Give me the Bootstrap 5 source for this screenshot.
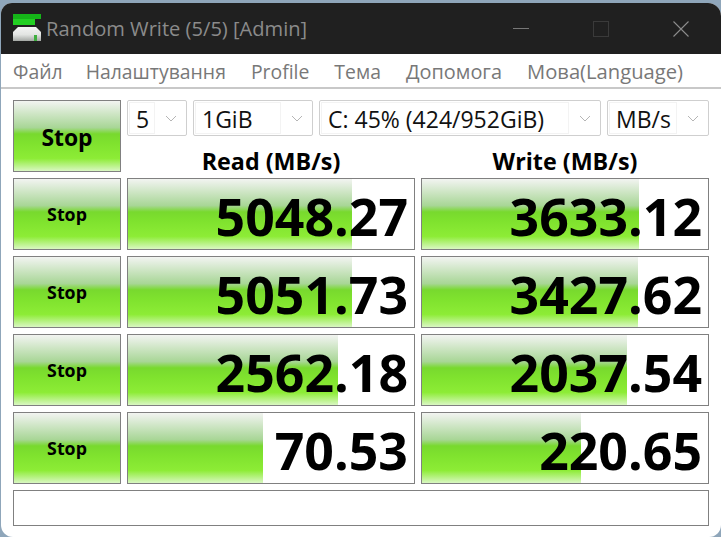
<!DOCTYPE html>
<html lang="uk">
<head>
<meta charset="utf-8">
<title>Random Write (5/5) [Admin]</title>
<link href="https://cdn.jsdelivr.net/npm/bootstrap@5.3.0/dist/css/bootstrap.min.css" rel="stylesheet">
<style>
html,body{height:100%;overflow:hidden}
body{background:#8fa6ba;font-family:"Open Sans","Noto Sans",sans-serif;color:#000;padding:3px 0 0 1px}
.app-win{width:720px;height:534px;background:#fff;border-radius:11px 13px 12px 12px;overflow:hidden}
.title-bar{height:51px;background:#202020;color:#8b8b8b;padding-left:12px}
.title-text{font-size:20.1px;margin-left:4px;line-height:1;padding-top:2px}
.win-ctrls{margin-left:auto;color:#8b8b8b}
.win-ctl{width:80px;height:51px}
.menu-row{height:35px;border-bottom:2px solid #c8c8c8;padding:2px 0 0 12px;gap:25px;font-size:19.4px;color:#787878;line-height:1}
.menu-first{margin-right:-2px}
.menu-wide{font-size:19.9px}
.menu-last{font-size:20.2px}
.panel-body{padding:11px 12px 0;gap:6px}
.line-row{display:grid;grid-template-columns:108px 288px 288px;gap:6px}
.top-grid{display:grid;grid-template-columns:108px 1fr;column-gap:6px;height:72px}
.stop-btn{background:linear-gradient(#f2f4f1 0,#a8d696 38%,#78d92e 47%,#7fe22e 60%,#8dec36 82%,#d9f7c2 100%);border:1px solid #808080;border-radius:0;padding:0 0 0;color:#000;font-weight:700;font-size:17.8px;height:72px;display:flex;align-items:center;justify-content:center}
.stop-big{font-size:22.9px;padding-top:4px}
.combos{gap:6px;height:35px}
.combo-box{height:36px;border:1px solid #cfcfcf;border-radius:2px;background:#fff;font-size:23px;line-height:1;color:#111;padding:1px}
.combo-field{height:100%;border:1px solid #f3f3f3;padding:2px 0 0 6px;flex-grow:1}
.chev-slot{width:30px;flex:none;padding-left:2px}
.cb-a{width:60px}.cb-b{width:120px}.cb-c{width:282px}.cb-d{width:102px}
.head-row{display:grid;grid-template-columns:288px 288px;gap:6px;height:31px;margin-top:11px}
.head-cell{font-size:23.3px;font-weight:700;text-align:center;line-height:31px}
.val-cell{--fill:50%;height:72px;border:1px solid #808080;background:linear-gradient(#f2f4f1 0,#a8d696 38%,#78d92e 47%,#7fe22e 60%,#8dec36 82%,#d9f7c2 100%) no-repeat left/var(--fill) 100% #fff;font-size:51.8px;font-weight:700;text-align:right;line-height:75px;padding-right:6px}
.status-box{height:36px;border:1px solid #808080;background:#fff}
</style>
</head>
<body>
<div class="app-win d-flex flex-column">
  <header class="title-bar d-flex align-items-center">
    <svg width="29" height="29" viewBox="0 0 29 29" aria-hidden="true">
      <defs><linearGradient id="diskfill" x1="0" y1="0" x2="0" y2="1"><stop offset="0" stop-color="#f4f4f4"/><stop offset=".55" stop-color="#e2e4e2"/><stop offset="1" stop-color="#a4a8a4"/></linearGradient></defs>
      <rect x="0" y="0" width="28" height="5" fill="#15b518"/>
      <rect x="0" y="5" width="22" height="6" fill="#22cf22"/>
      <path d="M5 13H23L28 18V27H0V18Z" fill="url(#diskfill)"/>
      <rect x="21" y="21" width="3" height="6" fill="#3fae3f"/>
    </svg>
    <span class="title-text">Random Write (5/5) [Admin]</span>
    <div class="win-ctrls d-flex">
      <div class="win-ctl d-flex align-items-center justify-content-center">
        <svg width="16" height="2" viewBox="0 0 16 2"><rect width="16" height="1" fill="#777"/></svg>
      </div>
      <div class="win-ctl d-flex align-items-center justify-content-center">
        <svg width="16" height="16" viewBox="0 0 16 16"><rect x=".5" y=".5" width="15" height="15" fill="none" stroke="#3a3a3a"/></svg>
      </div>
      <div class="win-ctl d-flex align-items-center justify-content-center">
        <svg width="16" height="16" viewBox="0 0 16 16"><path d="M.5.5 15.5 15.5M15.5.5.5 15.5" stroke="#8b8b8b" fill="none" stroke-width="1.1"/></svg>
      </div>
    </div>
  </header>
  <nav class="menu-row d-flex align-items-center">
    <span class="menu-first">Файл</span><span>Налаштування</span><span>Profile</span><span>Тема</span><span class="menu-wide">Допомога</span><span class="menu-last">Мова(Language)</span>
  </nav>
  <main class="panel-body d-flex flex-column">
    <div class="top-grid">
      <button class="btn stop-btn stop-big" type="button">Stop</button>
      <div>
        <div class="combos d-flex">
          <div class="combo-box cb-a d-flex"><span class="combo-field d-flex align-items-center">5</span><span class="chev-slot d-flex align-items-center justify-content-center"><svg width="12" height="7" viewBox="0 0 12 7"><path d="M1 1 6 6 11 1" fill="none" stroke="#b5b5b5"/></svg></span></div>
          <div class="combo-box cb-b d-flex"><span class="combo-field d-flex align-items-center">1GiB</span><span class="chev-slot d-flex align-items-center justify-content-center"><svg width="12" height="7" viewBox="0 0 12 7"><path d="M1 1 6 6 11 1" fill="none" stroke="#b5b5b5"/></svg></span></div>
          <div class="combo-box cb-c d-flex"><span class="combo-field d-flex align-items-center">C: 45% (424/952GiB)</span><span class="chev-slot d-flex align-items-center justify-content-center"><svg width="12" height="7" viewBox="0 0 12 7"><path d="M1 1 6 6 11 1" fill="none" stroke="#b5b5b5"/></svg></span></div>
          <div class="combo-box cb-d d-flex"><span class="combo-field d-flex align-items-center">MB/s</span><span class="chev-slot d-flex align-items-center justify-content-center"><svg width="12" height="7" viewBox="0 0 12 7"><path d="M1 1 6 6 11 1" fill="none" stroke="#b5b5b5"/></svg></span></div>
        </div>
        <div class="head-row">
          <div class="head-cell">Read (MB/s)</div>
          <div class="head-cell">Write (MB/s)</div>
        </div>
      </div>
    </div>
    <div class="line-row">
      <button class="btn stop-btn" type="button">Stop</button>
      <div class="val-cell" style="--fill:224px">5048.27</div>
      <div class="val-cell" style="--fill:217px">3633.12</div>
    </div>
    <div class="line-row">
      <button class="btn stop-btn" type="button">Stop</button>
      <div class="val-cell" style="--fill:224px">5051.73</div>
      <div class="val-cell" style="--fill:216px">3427.62</div>
    </div>
    <div class="line-row">
      <button class="btn stop-btn" type="button">Stop</button>
      <div class="val-cell" style="--fill:210px">2562.18</div>
      <div class="val-cell" style="--fill:205px">2037.54</div>
    </div>
    <div class="line-row">
      <button class="btn stop-btn" type="button">Stop</button>
      <div class="val-cell" style="--fill:135px">70.53</div>
      <div class="val-cell" style="--fill:159px">220.65</div>
    </div>
    <div class="status-box"></div>
  </main>
</div>
</body>
</html>
